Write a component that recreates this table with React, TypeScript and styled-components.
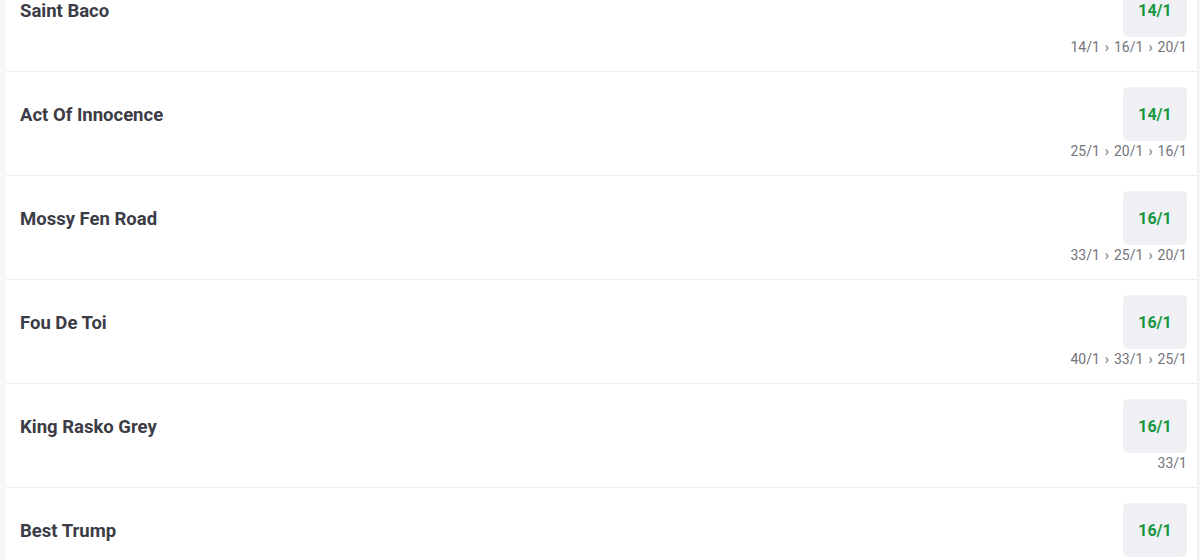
import { Fragment } from 'react';
import { createGlobalStyle, styled } from 'styled-components';

const GlobalStyle = createGlobalStyle`
  html, body {
    margin: 0;
    padding: 0;
    background: #f6f6f7;
    font-family: Roboto, 'Liberation Sans', Arial, sans-serif;
    overflow: hidden;
  }
`;

const Page = styled.div`
  height: 560px;
  overflow: hidden;
  padding-left: 6px;
`;

const Card = styled.div`
  background: #ffffff;
  margin-top: -32px;
  border-right: 1px solid #f1f1f2;
  margin-right: 2px;
`;

const Row = styled.div`
  height: 104px;
  box-sizing: border-box;
  padding: 15px 10px 0 14px;
  border-bottom: 1px solid #eeeeef;
  display: flex;
  flex-direction: column;
`;

const Main = styled.div`
  display: flex;
  align-items: center;
  justify-content: space-between;
  height: 54px;
`;

const Name = styled.div`
  font-size: 18.5px;
  font-weight: 700;
  color: #3c3c47;
  padding-top: 1px;
`;

const OddsButton = styled.div`
  width: 64px;
  height: 54px;
  border-radius: 5px;
  background: #eff0f3;
  color: #17963f;
  font-size: 16px;
  font-weight: 700;
  display: flex;
  align-items: center;
  justify-content: center;
`;

const History = styled.div`
  text-align: right;
  font-size: 14px;
  line-height: 20px;
  color: #74747c;
`;

const Sep = styled.span`
  margin: 0 5px;
`;

const runners = [
  { name: 'Saint Baco', odds: '14/1', history: ['14/1', '16/1', '20/1'] },
  { name: 'Act Of Innocence', odds: '14/1', history: ['25/1', '20/1', '16/1'] },
  { name: 'Mossy Fen Road', odds: '16/1', history: ['33/1', '25/1', '20/1'] },
  { name: 'Fou De Toi', odds: '16/1', history: ['40/1', '33/1', '25/1'] },
  { name: 'King Rasko Grey', odds: '16/1', history: ['33/1'] },
  { name: 'Best Trump', odds: '16/1', history: [] as string[] },
];

export default function App() {
  return (
    <Page>
      <GlobalStyle />
      <Card>
        {runners.map((r) => (
          <Row key={r.name}>
            <Main>
              <Name>{r.name}</Name>
              <OddsButton>{r.odds}</OddsButton>
            </Main>
            <History>
              {r.history.map((h, i) => (
                <Fragment key={i}>
                  {i > 0 && <Sep>›</Sep>}
                  {h}
                </Fragment>
              ))}
            </History>
          </Row>
        ))}
      </Card>
    </Page>
  );
}
